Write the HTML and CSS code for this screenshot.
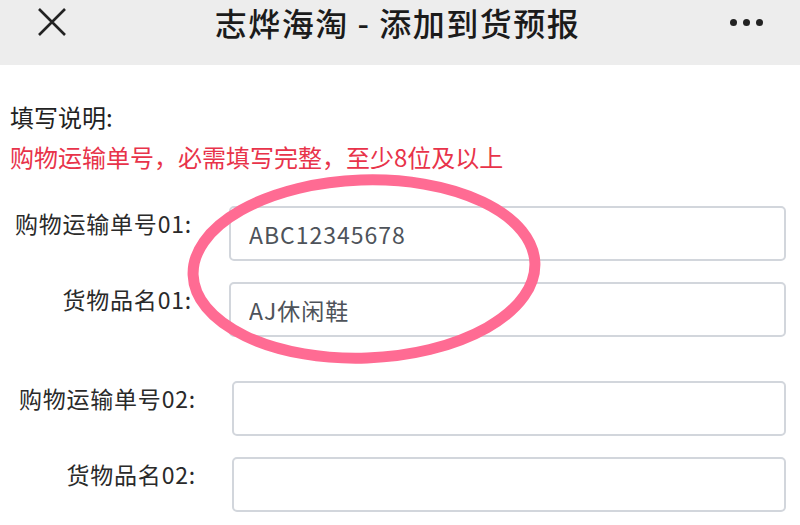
FILE: index.html
```html
<!DOCTYPE html>
<html lang="zh-CN">
<head>
    <meta charset="UTF-8">
    <meta name="viewport" content="width=device-width, initial-scale=1.0">
    <title>志烨海淘 - 添加到货预报</title>
    <link rel="stylesheet" href="styles.css">
</head>
<body>
    <div id="page">
        <div class="topbar">
            <div class="bar-left">
                <svg class="close-icon" width="28" height="28" viewBox="0 0 28 28">
                    <path d="M1 1 L27 27 M27 1 L1 27" stroke="#222" stroke-width="2.6" fill="none"/>
                </svg>
            </div>
            <div class="bar-title">志烨海淘 - 添加到货预报</div>
            <div class="bar-right">
                <span class="dot"></span><span class="dot"></span><span class="dot"></span>
            </div>
        </div>

        <div class="notes">
            <p class="notes-title">填写说明:</p>
            <p class="notes-warn">购物运输单号，必需填写完整，至少8位及以上</p>
        </div>

        <div class="form-table first">
            <label class="field-label">购物运输单号01:</label>
            <input class="field-input" type="text" value="ABC12345678">
            <label class="field-label">货物品名01:</label>
            <input class="field-input" type="text" value="AJ休闲鞋">
        </div>

        <div class="form-table second">
            <label class="field-label">购物运输单号02:</label>
            <input class="field-input" type="text" value="">
            <label class="field-label">货物品名02:</label>
            <input class="field-input" type="text" value="">
        </div>

        <!-- hand drawn mark over the first two fields -->
        <svg class="mark" width="800" height="525" viewBox="0 0 800 525">
            <ellipse cx="364" cy="269" rx="171" ry="89" transform="rotate(-2 364 269)"
                     fill="none" stroke="#ff6b93" stroke-width="11"/>
        </svg>
    </div>
</body>
</html>
```

FILE: styles.css
```css
body {
    margin: 0;
    background-color: #fff;
    font-family: "Noto Sans CJK SC", "Noto Sans", sans-serif;
    color: #222;
}
#page {
    position: relative;
    width: 800px;
    height: 525px;
    overflow: hidden;
}
.topbar {
    display: grid;
    grid-template-columns: 1fr auto 1fr;
    height: 65px;
    background-color: #ededed;
}
.bar-left {
    padding: 8px 0 0 38px;
}
.close-icon {
    display: block;
}
.bar-title {
    font-size: 32px;
    font-weight: 500;
    letter-spacing: 1.5px;
    line-height: 45px;
    color: #1b1b1b;
    margin-left: -5px;
}
.bar-right {
    display: flex;
    justify-content: flex-end;
    gap: 6px;
    padding: 19px 37px 0 0;
}
.dot {
    width: 7px;
    height: 7px;
    border-radius: 50%;
    background-color: #222;
}
.notes {
    padding: 32px 10px 0 10px;
}
.notes p {
    margin: 0;
    font-size: 24px;
    line-height: 40px;
}
.notes-title {
    color: #222;
}
.notes-warn {
    color: #e8334a;
}
.form-table {
    display: grid;
    row-gap: 21px;
    padding: 0 14px 0 10px;
}
.form-table.first {
    grid-template-columns: 182px 1fr;
    column-gap: 37px;
    margin-top: 29px;
}
.form-table.second {
    grid-template-columns: 186px 1fr;
    column-gap: 36px;
    margin-top: 44px;
}
.field-label {
    text-align: right;
    font-size: 23px;
    letter-spacing: 0.8px;
    line-height: 34px;
    color: #2a2a2a;
    white-space: nowrap;
}
.field-input {
    box-sizing: border-box;
    height: 55px;
    width: 100%;
    border: 2px solid #d2d6dc;
    border-radius: 5px;
    padding: 0 18px;
    font-family: "Noto Sans CJK SC", "Noto Sans", sans-serif;
    font-size: 23px;
    letter-spacing: 1px;
    color: #4e535a;
    background-color: #fff;
    outline: none;
}
.mark {
    position: absolute;
    left: 0;
    top: 0;
    pointer-events: none;
}
```
